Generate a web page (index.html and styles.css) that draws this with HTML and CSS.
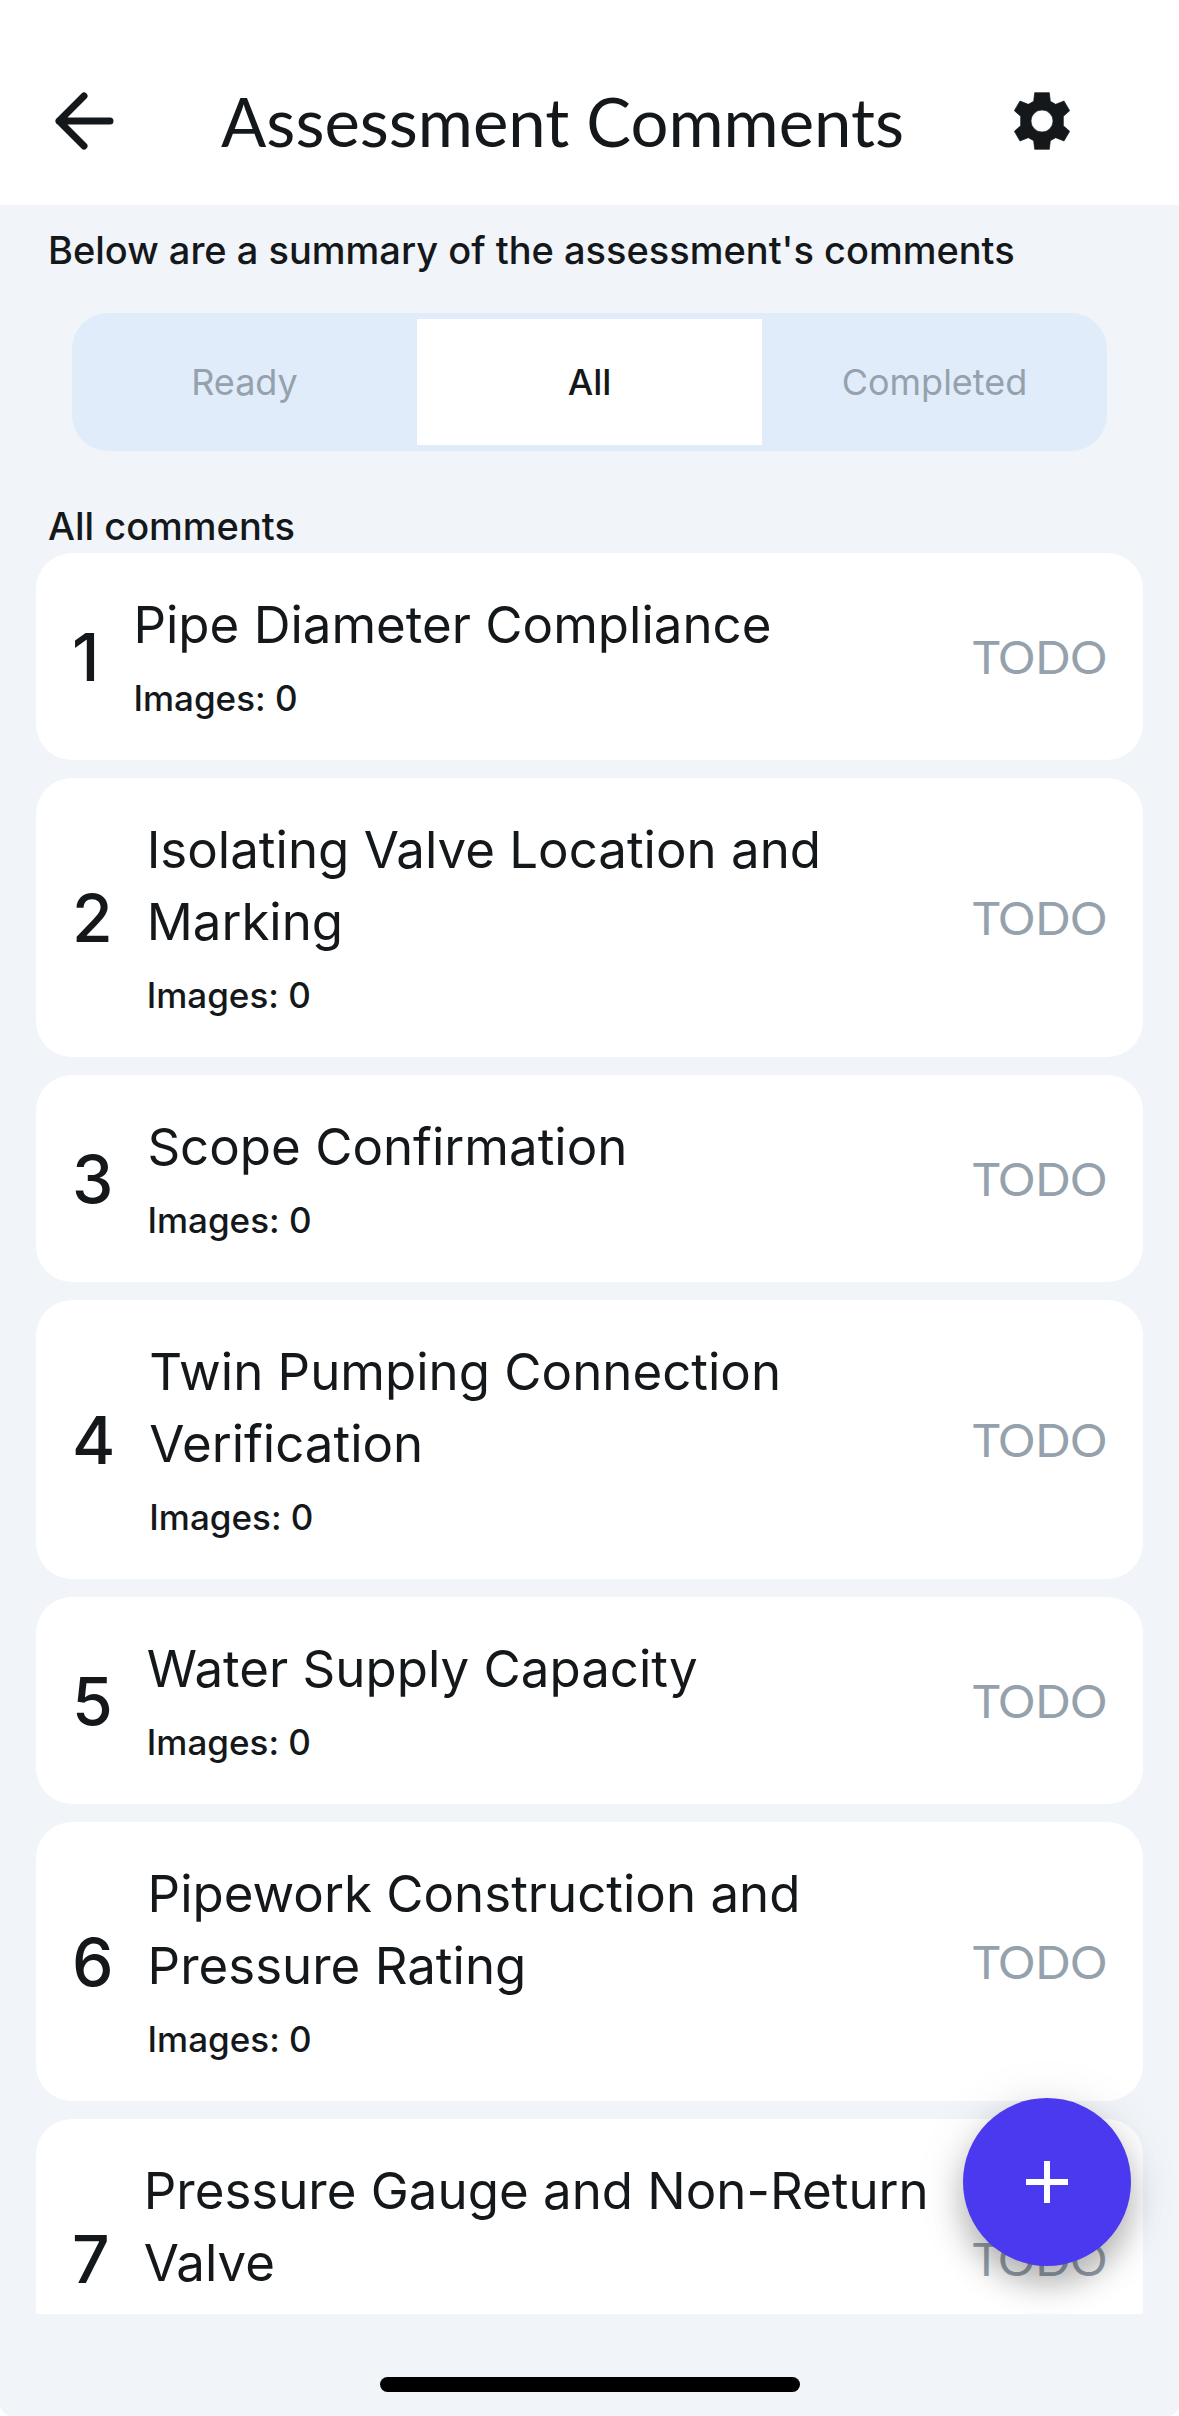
FILE: index.html
```html
<!DOCTYPE html>
<html lang="en">

<head>
    <meta charset="UTF-8">
    <meta name="viewport" content="width=device-width, initial-scale=1.0">
    <title>Assessment Comments</title>
    <link rel="stylesheet" href="styles.css">
</head>

<body>
    <div class="screen">
        <header class="topbar">
            <button class="icon-button" type="button" aria-label="Back">
                <svg class="icon-back" viewBox="0 0 90 90">
                    <path d="M72 45H21M46 20L21 45L46 70" />
                </svg>
            </button>
            <h1>Assessment Comments</h1>
            <button class="icon-button" type="button" aria-label="Settings">
                <svg class="icon-settings" viewBox="0 0 270 270">
                    <path fill-rule="evenodd" d="M113 50H157L160 76L176 85L201 75L218 104L199 121V149L218 166L201 195L176 185L160 194L157 220H113L110 194L94 185L69 195L52 166L71 149V121L52 104L69 75L94 85L110 76ZM135 102A33 33 0 1 0 135 168A33 33 0 1 0 135 102Z" />
                </svg>
            </button>
        </header>

        <main class="content">
            <p class="label">Below are a summary of the assessment's comments</p>

            <div class="tabs" role="tablist">
                <button class="tab" type="button" role="tab" aria-selected="false">Ready</button>
                <button class="tab active" type="button" role="tab" aria-selected="true">All</button>
                <button class="tab" type="button" role="tab" aria-selected="false">Completed</button>
            </div>

            <h2 class="label">All comments</h2>

            <ol class="comments">
                <li class="comment">
                    <span class="number">1</span>
                    <div class="info">
                        <h3>Pipe Diameter Compliance</h3>
                        <p>Images: 0</p>
                    </div>
                    <span class="status">TODO</span>
                </li>
                <li class="comment">
                    <span class="number">2</span>
                    <div class="info">
                        <h3>Isolating Valve Location and Marking</h3>
                        <p>Images: 0</p>
                    </div>
                    <span class="status">TODO</span>
                </li>
                <li class="comment">
                    <span class="number">3</span>
                    <div class="info">
                        <h3>Scope Confirmation</h3>
                        <p>Images: 0</p>
                    </div>
                    <span class="status">TODO</span>
                </li>
                <li class="comment">
                    <span class="number">4</span>
                    <div class="info">
                        <h3>Twin Pumping Connection Verification</h3>
                        <p>Images: 0</p>
                    </div>
                    <span class="status">TODO</span>
                </li>
                <li class="comment">
                    <span class="number">5</span>
                    <div class="info">
                        <h3>Water Supply Capacity</h3>
                        <p>Images: 0</p>
                    </div>
                    <span class="status">TODO</span>
                </li>
                <li class="comment">
                    <span class="number">6</span>
                    <div class="info">
                        <h3>Pipework Construction and Pressure Rating</h3>
                        <p>Images: 0</p>
                    </div>
                    <span class="status">TODO</span>
                </li>
                <li class="comment">
                    <span class="number">7</span>
                    <div class="info">
                        <h3>Pressure Gauge and Non-Return Valve</h3>
                        <p>Images: 0</p>
                    </div>
                    <span class="status">TODO</span>
                </li>
            </ol>
        </main>

        <footer class="home-area">
            <div class="home-indicator"></div>
        </footer>

        <button class="fab" type="button" aria-label="Add comment">
            <svg viewBox="0 0 24 24">
                <path d="M19 13h-6v6h-2v-6H5v-2h6V5h2v6h6v2z" />
            </svg>
        </button>
    </div>
</body>

</html>
```
FILE: styles.css
```css
* {
    margin: 0;
    padding: 0;
    box-sizing: border-box;
    font-family: "Inter", sans-serif;
}

body {
    background-color: #fff;
    color: #14181b;
}

button {
    border: none;
    background: none;
    cursor: pointer;
}

.screen {
    position: relative;
    height: 100vh;
    display: flex;
    flex-direction: column;
    overflow: hidden;
    background-color: #f1f4f8;
    border-radius: 0 0 12px 12px;
}

/* --------------------- Top bar --------------------- */

.topbar {
    display: flex;
    align-items: center;
    justify-content: space-between;
    padding: 36px 54px 0 0;
    background-color: #fff;
}

.topbar h1 {
    font-family: "Lato", sans-serif;
    font-size: 67px;
    line-height: 80px;
    font-weight: 400;
}

.icon-button {
    width: 166px;
    height: 169px;
    display: flex;
    align-items: center;
    justify-content: center;
}

.icon-button svg {
    width: 90px;
    height: 90px;
}

.icon-back {
    fill: none;
    stroke: #14181b;
    stroke-width: 7;
    stroke-linecap: round;
    stroke-linejoin: round;
}

.icon-settings {
    fill: #14181b;
    stroke: #14181b;
    stroke-width: 2;
    stroke-linejoin: round;
}

/* --------------------- Content --------------------- */

.content {
    flex: 1;
    min-height: 0;
    display: flex;
    flex-direction: column;
    padding: 18px 36px 0;
}

.label {
    padding: 0 12px;
    font-size: 38px;
    line-height: 54px;
    font-weight: 500;
}

.tabs {
    display: flex;
    margin: 36px 36px 48px;
    padding: 6px 0;
    border-radius: 36px;
    background-color: #e0ecf9;
}

.tab {
    flex: 1;
    height: 126px;
    font-size: 36px;
    color: #95a1ac;
}

.tab.active {
    background-color: #fff;
    color: #14181b;
    font-weight: 500;
}

/* --------------------- Comments --------------------- */

.comments {
    flex: 1;
    min-height: 0;
    display: flex;
    flex-direction: column;
    gap: 18px;
    overflow: hidden;
    list-style: none;
}

.comment {
    flex-shrink: 0;
    display: flex;
    align-items: center;
    gap: 34px;
    padding: 36px;
    border-radius: 36px;
    background-color: #fff;
}

.number {
    font-size: 66px;
    line-height: 96px;
    font-weight: 500;
}

.info {
    flex: 1;
}

.info h3 {
    font-size: 51px;
    line-height: 72px;
    font-weight: 400;
}

.info p {
    margin-top: 12px;
    font-size: 35px;
    line-height: 51px;
    font-weight: 500;
}

.status {
    font-family: "Lato", sans-serif;
    font-size: 46px;
    line-height: 58px;
    color: #95a1ac;
}

/* --------------------- Add button --------------------- */

.fab {
    position: absolute;
    right: 48px;
    bottom: 150px;
    width: 168px;
    height: 168px;
    display: flex;
    align-items: center;
    justify-content: center;
    border-radius: 50%;
    background-color: #4b39ef;
    box-shadow: 0 18px 30px rgba(0, 0, 0, 0.25), 0 6px 54px rgba(0, 0, 0, 0.1);
}

.fab svg {
    width: 72px;
    height: 72px;
    fill: #fff;
}

/* --------------------- Home indicator --------------------- */

.home-area {
    height: 102px;
    display: flex;
    align-items: flex-end;
    justify-content: center;
    padding-bottom: 24px;
}

.home-indicator {
    width: 420px;
    height: 15px;
    border-radius: 8px;
    background-color: #000;
}
```
